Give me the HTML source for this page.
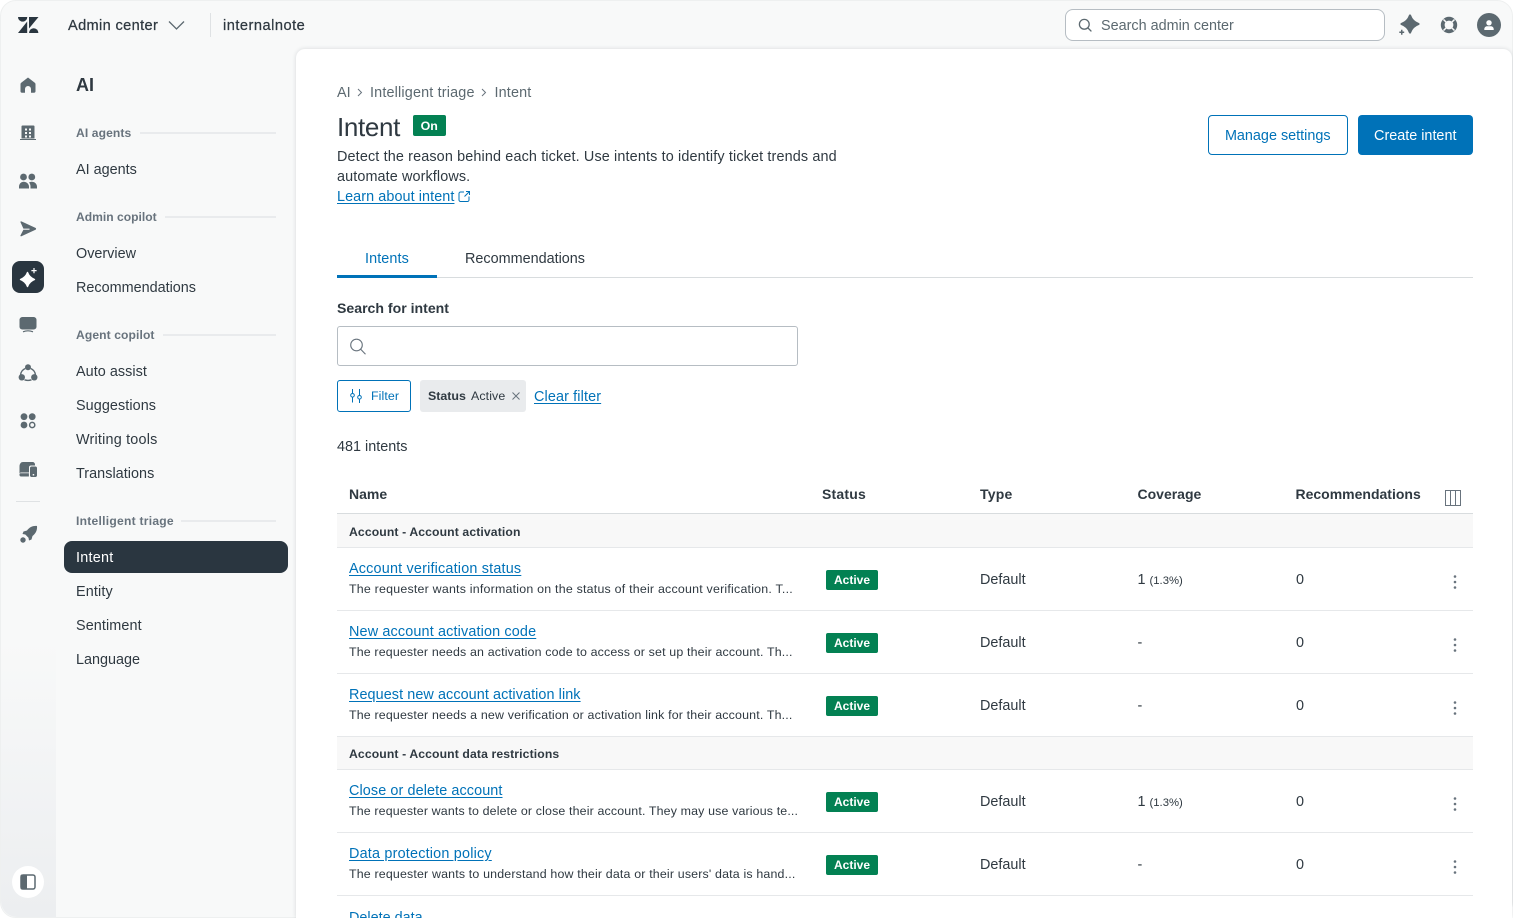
<!DOCTYPE html>
<html lang="en"><head><meta charset="utf-8"><title>Intent - Admin center</title>
<style>
html,body{margin:0;padding:0;background:#fff;width:1513px;height:918px;overflow:hidden}
#app{position:relative;width:1513px;height:918px;overflow:hidden;font-family:"Liberation Sans",Arial,sans-serif;color:#2f3941}
#frame{position:absolute;left:0;top:0;width:1511px;height:916px;background:#f8f9f9;border:1px solid #eef0f0;border-radius:16px;overflow:hidden}
#rail{position:absolute;left:1px;top:640px;width:55px;height:277px;border-bottom-left-radius:16px;background:linear-gradient(#f8f9f9,#eceef0)}
#main{position:absolute;left:296px;top:49px;width:1216px;height:869px;background:#fff;border-top-left-radius:9px;border-top-right-radius:9px;box-shadow:0 0 4px rgba(40,50,60,.16)}
.t{position:absolute;white-space:nowrap;line-height:20px;font-size:14.4px;color:#2f3941;margin-top:1px}
.m{-webkit-text-stroke:.25px currentColor}
.b{font-weight:700;margin-top:0}
.s{font-size:12.1px;color:#68737d;font-weight:700;margin-top:0;letter-spacing:.1px}
.l{color:#0072b8;text-decoration:underline;text-underline-offset:2px}
.r{letter-spacing:.15px}
.d{font-size:12.4px;color:#2f3941;margin-top:0;letter-spacing:.21px}
.g{font-size:12.2px;font-weight:700;color:#2f3941;letter-spacing:.12px;margin-top:0}
.box{position:absolute;box-sizing:border-box}
.line{position:absolute;height:1px;background:#e6e8ea}
.pill{position:absolute;left:826px;width:52px;height:20px;background:#038153;border-radius:2px;color:#fff;font-size:12px;font-weight:700;line-height:20px;text-align:center}
svg{position:absolute;left:0;top:0}
</style></head><body><div id="app">
<div id="frame"></div><div id="rail"></div><div id="main"></div>

<!-- nav -->
<div class="box" style="left:64px;top:541px;width:224px;height:32px;background:#2a3640;border-radius:8px"></div>
<div class="box" style="left:12px;top:261px;width:32px;height:32px;background:#2a3640;border-radius:8px"></div>
<div class="box" style="left:12px;top:866px;width:32px;height:32px;background:#fff;border-radius:50%"></div>

<div class="t m" style="left:68px;top:15px;font-size:14.6px;letter-spacing:.35px">Admin center</div>
<div class="t m" style="left:223px;top:15px;font-size:14.6px;letter-spacing:.5px">internalnote</div>
<div class="box" style="left:210px;top:13px;width:1px;height:24px;background:#dfe2e4"></div>
<div class="box" style="left:1065px;top:9px;width:320px;height:32px;background:#fff;border:1px solid #b6bdc3;border-radius:8px"></div>
<div class="t" style="left:1101px;top:15px;color:#5c6970">Search admin center</div>

<div class="t b" style="left:76px;top:75px;font-size:18px">AI</div>
<div class="t s" style="left:76px;top:123px">AI agents</div><div class="line" style="left:140px;top:132px;width:136px;height:2px;background:#e9ebed"></div>
<div class="t" style="left:76px;top:159px">AI agents</div>
<div class="t s" style="left:76px;top:207px;letter-spacing:0">Admin copilot</div><div class="line" style="left:165px;top:216px;width:111px;height:2px;background:#e9ebed"></div>
<div class="t" style="left:76px;top:243px">Overview</div>
<div class="t" style="left:76px;top:277px">Recommendations</div>
<div class="t s" style="left:76px;top:325px">Agent copilot</div><div class="line" style="left:163px;top:334px;width:113px;height:2px;background:#e9ebed"></div>
<div class="t" style="left:76px;top:361px;letter-spacing:.05px">Auto assist</div>
<div class="t" style="left:76px;top:395px;letter-spacing:.08px">Suggestions</div>
<div class="t" style="left:76px;top:429px;letter-spacing:.2px">Writing tools</div>
<div class="t" style="left:76px;top:463px;letter-spacing:.04px">Translations</div>
<div class="t s" style="left:76px;top:511px;letter-spacing:.25px">Intelligent triage</div><div class="line" style="left:181px;top:520px;width:95px;height:2px;background:#e9ebed"></div>
<div class="t" style="left:76px;top:547px;color:#fff;letter-spacing:.25px">Intent</div>
<div class="t" style="left:76px;top:581px;letter-spacing:.15px">Entity</div>
<div class="t" style="left:76px;top:615px;letter-spacing:.1px">Sentiment</div>
<div class="t" style="left:76px;top:649px">Language</div>

<!-- header of page -->
<div class="t" style="left:337px;top:82px;color:#5c6970">AI</div>
<div class="t" style="left:370px;top:82px;color:#5c6970;letter-spacing:.17px">Intelligent triage</div>
<div class="t" style="left:494.5px;top:82px;color:#5c6970;letter-spacing:.15px">Intent</div>
<div class="t" style="left:337px;top:112px;font-size:26px;line-height:30px;letter-spacing:-.35px;margin-top:0">Intent</div>
<div class="box" style="left:413px;top:115px;width:32.5px;height:20.5px;background:#038153;border-radius:2px;color:#fff;font-size:12.4px;font-weight:700;line-height:23px;text-align:center">On</div>
<div class="t" style="left:337px;top:146px;letter-spacing:.14px">Detect the reason behind each ticket. Use intents to identify ticket trends and</div>
<div class="t" style="left:337px;top:166px;letter-spacing:.11px">automate workflows.</div>
<div class="t l" style="left:337px;top:186px;letter-spacing:.08px">Learn about intent</div>

<div class="box" style="left:1208px;top:115px;width:139.5px;height:40px;border:1px solid #0072b8;border-radius:4px;color:#0072b8;font-size:14.4px;line-height:40px;text-align:center">Manage settings</div>
<div class="box" style="left:1357.5px;top:115px;width:115.5px;height:40px;background:#0072b8;border-radius:4px;color:#fff;font-size:14.4px;line-height:42px;text-align:center">Create intent</div>

<!-- tabs -->
<div class="t" style="left:365px;top:248px;color:#0072b8;letter-spacing:.1px">Intents</div>
<div class="t" style="left:465px;top:248px">Recommendations</div>
<div class="line" style="left:337px;top:277px;width:1136px;background:#d8dcde"></div>
<div class="box" style="left:337px;top:275px;width:100px;height:2.5px;background:#0072b8"></div>

<!-- search/filter -->
<div class="t b" style="left:337px;top:298px;font-size:14.1px">Search for intent</div>
<div class="box" style="left:337px;top:326px;width:461px;height:40px;border:1px solid #b6bdc3;border-radius:3px"></div>
<div class="box" style="left:337px;top:380px;width:74px;height:32px;border:1px solid #0072b8;border-radius:3px"></div>
<div class="t" style="left:371px;top:386px;font-size:12.4px;color:#0072b8;margin-top:0;letter-spacing:.1px">Filter</div>
<div class="box" style="left:420px;top:380px;width:106px;height:32px;background:#e9ebed;border-radius:3px"></div>
<div class="t b" style="left:428px;top:386px;font-size:12.4px">Status</div>
<div class="t" style="left:471px;top:386px;font-size:12.4px;margin-top:0;letter-spacing:.1px">Active</div>
<div class="t l" style="left:534px;top:386px;letter-spacing:.13px">Clear filter</div>
<div class="t" style="left:337px;top:436px">481 intents</div>

<!-- table -->
<div class="t b" style="left:349px;top:484px;font-size:14px">Name</div>
<div class="t b" style="left:822px;top:484px;font-size:14px;letter-spacing:.2px">Status</div>
<div class="t b" style="left:980px;top:484px;font-size:14px;letter-spacing:.2px">Type</div>
<div class="t b" style="left:1137.5px;top:484px;font-size:14px">Coverage</div>
<div class="t b" style="left:1295.5px;top:484px;font-size:14px">Recommendations</div>
<div class="line" style="left:337px;top:513px;width:1136px;background:#d8dcde"></div>

<div class="box" style="left:337px;top:514px;width:1136px;height:33px;background:#f8f8f8"></div>
<div class="line" style="left:337px;top:547px;width:1136px"></div>
<div class="t g" style="left:349px;top:521.5px">Account - Account activation</div>

<div class="t l r" style="left:349px;top:558px;letter-spacing:.19px">Account verification status</div>
<div class="t d" style="left:349px;top:579px;letter-spacing:.22px">The requester wants information on the status of their account verification. T...</div>
<div class="pill" style="top:569.5px">Active</div>
<div class="t" style="left:980px;top:569px">Default</div>
<div class="t" style="left:1137.5px;top:569px">1 <span style="font-size:11.3px">(1.3%)</span></div>
<div class="t" style="left:1296px;top:569px">0</div>
<div class="line" style="left:337px;top:610px;width:1136px"></div>

<div class="t l r" style="left:349px;top:621px">New account activation code</div>
<div class="t d" style="left:349px;top:642px;letter-spacing:.16px">The requester needs an activation code to access or set up their account. Th...</div>
<div class="pill" style="top:632.5px">Active</div>
<div class="t" style="left:980px;top:632px">Default</div>
<div class="t" style="left:1137.5px;top:632px">-</div>
<div class="t" style="left:1296px;top:632px">0</div>
<div class="line" style="left:337px;top:673px;width:1136px"></div>

<div class="t l" style="left:349px;top:684px;letter-spacing:.08px">Request new account activation link</div>
<div class="t d" style="left:349px;top:705px;letter-spacing:.17px">The requester needs a new verification or activation link for their account. Th...</div>
<div class="pill" style="top:695.5px">Active</div>
<div class="t" style="left:980px;top:695px">Default</div>
<div class="t" style="left:1137.5px;top:695px">-</div>
<div class="t" style="left:1296px;top:695px">0</div>

<div class="line" style="left:337px;top:736px;width:1136px"></div>
<div class="box" style="left:337px;top:737px;width:1136px;height:32px;background:#f8f8f8"></div>
<div class="line" style="left:337px;top:769px;width:1136px"></div>
<div class="t g" style="left:349px;top:743.5px">Account - Account data restrictions</div>

<div class="t l" style="left:349px;top:780px;letter-spacing:.1px">Close or delete account</div>
<div class="t d" style="left:349px;top:801px;letter-spacing:.15px">The requester wants to delete or close their account. They may use various te...</div>
<div class="pill" style="top:791.5px">Active</div>
<div class="t" style="left:980px;top:791px">Default</div>
<div class="t" style="left:1137.5px;top:791px">1 <span style="font-size:11.3px">(1.3%)</span></div>
<div class="t" style="left:1296px;top:791px">0</div>
<div class="line" style="left:337px;top:832px;width:1136px"></div>

<div class="t l" style="left:349px;top:843px;letter-spacing:.2px">Data protection policy</div>
<div class="t d" style="left:349px;top:864px;letter-spacing:.17px">The requester wants to understand how their data or their users' data is hand...</div>
<div class="pill" style="top:854.5px">Active</div>
<div class="t" style="left:980px;top:854px">Default</div>
<div class="t" style="left:1137.5px;top:854px">-</div>
<div class="t" style="left:1296px;top:854px">0</div>
<div class="line" style="left:337px;top:895px;width:1136px"></div>

<div class="t l" style="left:349px;top:907px">Delete data</div>

<!-- icons, screen coordinates -->
<svg width="1513" height="918" viewBox="0 0 1513 918" fill="none">
<!-- logo -->
<g fill="#2a3640">
<path d="M18 17h9.3a4.65 4.65 0 0 1-9.3 0z"/>
<path d="M29 17h9.5L29 28.5z"/>
<path d="M27.2 21.5V33H18z"/>
<path d="M29 33a4.7 4.7 0 0 1 9.4 0z"/>
</g>
<path d="M169 21.5l7.5 7.5 7.500-7.500" stroke="#5c6970" stroke-width="1.3"/>
<!-- top search -->
<circle cx="1084.3" cy="24.3" r="4.9" stroke="#5c6970" stroke-width="1.3"/><path d="M1088 28l3 3" stroke="#5c6970" stroke-width="1.3" stroke-linecap="round"/>
<!-- top sparkle -->
<g fill="#5c6970">
<path d="M1410 15.500Q1412.200 21.800 1418.500 24 1412.200 26.200 1410 32.500 1407.800 26.200 1401.500 24 1407.800 21.800 1410 15.500z" stroke="#5c6970" stroke-width="2.200" stroke-linejoin="round"/>
<path d="M1401 29.800h1.500v1.700h1.700v1.500h-1.700v1.700H1401V33h-1.700v-1.500h1.700z"/>
</g>
<!-- lifebuoy -->
<circle cx="1449" cy="25" r="6.300" stroke="#5c6970" stroke-width="3.800"/>
<path d="M1443.500 19.500l3 3M1454.500 19.500l-3 3M1443.500 30.500l3-3M1454.500 30.500l-3-3" stroke="#f8f9f9" stroke-width="1.500"/>
<!-- avatar -->
<circle cx="1489" cy="25" r="12" fill="#5c6970"/>
<circle cx="1489" cy="22.800" r="2.700" fill="#fff"/><path d="M1484.300 30v-1c0-1.600 1.300-2.800 2.800-2.800h3.800c1.500 0 2.800 1.200 2.800 2.800v1z" fill="#fff"/>
<!-- rail icons -->
<g fill="#5c6970">
<path d="M28 77.500l6.800 5.300c.5.400.7.900.7 1.500v7c0 .9-.6 1.500-1.500 1.500h-3V89a3 3 0 0 0-6 0v3.800h-3c-.9 0-1.500-.6-1.500-1.500v-7c0-.6.200-1.100.7-1.500z"/>
<path fill-rule="evenodd" d="M22.500 125.500h11c.6 0 1 .4 1 1v12h-13v-12c0-.6.400-1 1-1zM25 128.500v2h2v-2zM29 128.500v2h2v-2zM25 132v2h2v-2zM29 132v2h2v-2zM25 135.500v2h2v-2zM29 135.500v2h2v-2z"/>
<rect x="20" y="139" width="16" height="1"/>
<circle cx="23.500" cy="177" r="3.400"/><circle cx="31.800" cy="177" r="3.400"/>
<path d="M19 188.500v-1.800c0-3 2.200-5 4.700-5s5.300 2 5.300 5v1.800z"/>
<path d="M30.500 188.500v-2c0-1.700-.6-3-1.500-4 .8-.5 1.800-.8 2.800-.8 2.800 0 5.200 2 5.200 5v1.800z"/>
<path d="M20.500 222.300c-.4-.6.200-1.100.9-.9l14.100 6.500c.8.400.8 1.500 0 1.900l-14.100 6.500c-.7.200-1.300-.3-.9-.9l2.900-5.600h6.100v-1.200h-6.100z"/>
<rect x="19.500" y="317" width="17" height="12.500" rx="2.800"/>
<path d="M23 331.800c3-1.200 7-1.200 10 0" stroke="#5c6970" stroke-width="1.200" fill="none"/>
<circle cx="28" cy="367.300" r="3"/><circle cx="21.800" cy="377.300" r="3.200"/><circle cx="34.300" cy="377.300" r="3.200"/>
<path d="M25.300 368.500A8 8 0 0 0 20.500 375M30.700 368.500A8 8 0 0 1 35.500 375M24.500 379.800c2.300 .8 4.700 .8 7 0" stroke="#5c6970" stroke-width="1.400" fill="none"/>
<circle cx="24" cy="416.700" r="3.400"/><circle cx="32.200" cy="416.700" r="3.400"/><circle cx="24" cy="425" r="3.400"/>
<circle cx="32.200" cy="425" r="2.600" fill="none" stroke="#5c6970" stroke-width="1.500"/>
<path d="M23 462h9.500c1.300 0 2.500 1 2.500 2.500v1H31c-1.300 0-2 .8-2 2v5H21.500c-.8 0-1.300.2-2 .7v-6.700C19.500 463.700 21 462 23 462z"/>
<path d="M19.500 474c0-.5.500-.8 1-.8h8.400v3.300H21c-.8 0-1.500-.6-1.500-1.500z"/>
<path fill-rule="evenodd" d="M31.500 466.500h4c.8 0 1.500.7 1.500 1.500v7.500c0 .8-.7 1.500-1.500 1.500h-4c-.8 0-1.500-.7-1.500-1.500V468c0-.8.700-1.500 1.500-1.500zm1.200 7.500v1.500h1.500V474z"/>
<path d="M37 526c.4 4-1.100 7.400-4.500 10l-1 3.500-2.500 1-.5-2.800-3.200-3.200-2.800-.5 1-2.500 3.500-1c2.600-3.400 6-4.900 10-4.500z"/>
<circle cx="23" cy="540" r="2.700"/>
</g>
<rect x="16" y="501" width="24" height="1" fill="#dfe2e4"/>
<!-- active AI sparkle -->
<g fill="#fff">
<path d="M27.500 272.500Q29.300 277.500 34.500 279.500 29.300 281.500 27.500 286.500 25.700 281.500 20.500 279.500 25.700 277.500 27.500 272.500z" stroke="#fff" stroke-linejoin="round" stroke-width="1.400"/>
<path d="M33.400 268h1.200v2h2v1.200h-2v2h-1.200v-2h-2V270h2z"/>
</g>
<!-- panel toggle -->
<rect x="21" y="875" width="14" height="14" rx="2" stroke="#5c6970" stroke-width="1.500"/>
<path d="M22 875h4.500v14H22c-.6 0-1-.4-1-1v-12c0-.6.400-1 1-1z" fill="#5c6970" stroke="#5c6970"/>
<!-- breadcrumb chevrons -->
<path d="M358 89l3.500 3.500-3.500 3.500M482 89l3.500 3.500-3.500 3.500" stroke="#68737d" stroke-width="1"/>
<!-- external link -->
<path d="M464 192h-3.500c-.8 0-1.500.7-1.500 1.500v6.500c0 .8.700 1.500 1.500 1.500h7c.8 0 1.500-.7 1.500-1.500v-3.500M466 191.500h3.500V195M469.500 191.500l-5 5" stroke="#0072b8" stroke-width="1"/>
<!-- input search -->
<circle cx="356.500" cy="345" r="5.800" stroke="#68737d" stroke-width="1.100"/><path d="M360.700 349.200l4.800 5" stroke="#68737d" stroke-width="1.100"/>
<!-- filter sliders -->
<path d="M352.500 389v4M352.500 397.500v5M359.500 389v6M359.500 399.500v3.500" stroke="#0072b8" stroke-width="1"/>
<circle cx="352.500" cy="395.300" r="1.800" stroke="#0072b8"/><circle cx="359.500" cy="397.300" r="1.800" stroke="#0072b8"/>
<!-- chip x -->
<path d="M512.500 392.500l7 7M519.500 392.500l-7 7" stroke="#68737d" stroke-width="1"/>
<!-- columns icon -->
<path d="M1445.500 490.500h15v15h-15zM1450.500 490.500v15M1455.500 490.500v15" stroke="#68737d" stroke-width="1"/>
<!-- kebabs -->
<g fill="#68737d">
<circle cx="1455" cy="576.500" r="1.300"/><circle cx="1455" cy="582" r="1.300"/><circle cx="1455" cy="587.500" r="1.300"/>
<circle cx="1455" cy="639.500" r="1.300"/><circle cx="1455" cy="645" r="1.300"/><circle cx="1455" cy="650.500" r="1.300"/>
<circle cx="1455" cy="702.500" r="1.300"/><circle cx="1455" cy="708" r="1.300"/><circle cx="1455" cy="713.500" r="1.300"/>
<circle cx="1455" cy="798.500" r="1.300"/><circle cx="1455" cy="804" r="1.300"/><circle cx="1455" cy="809.500" r="1.300"/>
<circle cx="1455" cy="861.500" r="1.300"/><circle cx="1455" cy="867" r="1.300"/><circle cx="1455" cy="872.500" r="1.300"/>
</g>
</svg>
</div></body></html>
